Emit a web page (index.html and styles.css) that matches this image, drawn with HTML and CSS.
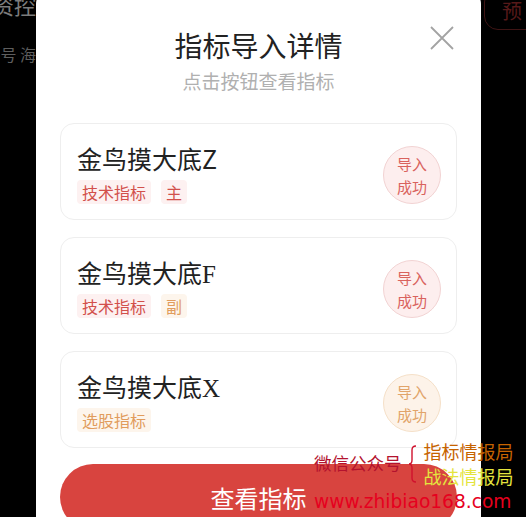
FILE: index.html
```html
<!DOCTYPE html>
<html lang="zh-CN">
<head>
    <meta charset="UTF-8">
    <meta name="viewport" content="width=device-width, initial-scale=1.0">
    <title>指标导入详情</title>
    <link rel="stylesheet" href="styles.css">
</head>
<body>

    <div class="page">
        <!-- dimmed page behind the dialog -->
        <div class="backdrop-left">
            <div class="bg-title">资控</div>
            <div class="bg-tabs">号 海</div>
        </div>

        <div class="modal">
            <div class="modal-header">
                <h1>指标导入详情</h1>
                <p class="subtitle">点击按钮查看指标</p>
                <button class="close-btn" aria-label="关闭">
                    <svg width="24" height="24" viewBox="0 0 24 24">
                        <path d="M1 1 L23 23 M23 1 L1 23" stroke="#a3a3a3" stroke-width="1.8" fill="none"/>
                    </svg>
                </button>
            </div>

            <div class="card-list">
                <div class="card">
                    <div class="card-info">
                        <div class="card-title">金鸟摸大底Z</div>
                        <div class="tags">
                            <span class="tag tag-red">技术指标</span>
                            <span class="tag tag-red">主</span>
                        </div>
                    </div>
                    <div class="badge badge-red">导入<br>成功</div>
                </div>

                <div class="card">
                    <div class="card-info">
                        <div class="card-title">金鸟摸大底<span class="serif">F</span></div>
                        <div class="tags">
                            <span class="tag tag-red">技术指标</span>
                            <span class="tag tag-orange">副</span>
                        </div>
                    </div>
                    <div class="badge badge-red">导入<br>成功</div>
                </div>

                <div class="card">
                    <div class="card-info">
                        <div class="card-title">金鸟摸大底<span class="serif">X</span></div>
                        <div class="tags">
                            <span class="tag tag-orange">选股指标</span>
                        </div>
                    </div>
                    <div class="badge badge-orange">导入<br>成功</div>
                </div>
            </div>

            <button class="view-btn">查看指标</button>
        </div>

        <div class="backdrop-right">
            <div class="bg-pill">预</div>
        </div>
    </div>

    <!-- watermark stamped over the screenshot -->
    <div class="watermark">
        <div class="wm-top">
            <span class="wm-label">微信公众号</span>
            <svg class="wm-brace" width="10" height="38" viewBox="0 0 10 38">
                <path d="M8 1 Q4 1 4 5 L4 15 Q4 19 1 19 Q4 19 4 23 L4 33 Q4 37 8 37" stroke="#d0122e" stroke-width="1.4" fill="none"/>
            </svg>
            <div class="wm-names">
                <span class="wm-name1">指标情报局</span>
                <span class="wm-name2">战法情报局</span>
            </div>
        </div>
        <div class="wm-url">www.zhibiao168.com</div>
    </div>

</body>
</html>
```

FILE: styles.css
```css
/* Page shell */
body {
    margin: 0;
    width: 526px;
    height: 517px;
    overflow: hidden;
    background-color: #000;
    font-family: "Noto Sans CJK SC", "Noto Sans", sans-serif;
    color: #222;
    position: relative;
}

.page {
    display: flex;
    height: 517px;
}

/* Dark page behind the overlay */
.backdrop-left {
    width: 36px;
    flex: none;
    overflow: hidden;
    display: flex;
    flex-direction: column;
    align-items: flex-end;
}

.bg-title {
    margin-top: -12px;
    font-size: 22px;
    line-height: 32px;
    color: #7c7c7c;
    white-space: nowrap;
}

.bg-tabs {
    margin-top: 24px;
    font-size: 16px;
    line-height: 20px;
    color: #5e5e5e;
    white-space: nowrap;
}

.backdrop-right {
    width: 45px;
    flex: none;
    overflow: hidden;
    padding-left: 3px;
}

.bg-pill {
    margin-top: -12px;
    height: 40px;
    width: 70px;
    border: 1px solid #3e1414;
    border-radius: 14px;
    padding-left: 17px;
    font-size: 20px;
    line-height: 44px;
    color: #561919;
    white-space: nowrap;
}

/* Dialog */
.modal {
    width: 445px;
    flex: none;
    box-sizing: border-box;
    margin-top: -10px;
    padding: 0 24px;
    background-color: #fff;
    border-radius: 14px 14px 0 0;
}

.modal-header {
    position: relative;
    padding-top: 37px;
    text-align: center;
}

.modal-header h1 {
    margin: 0;
    font-size: 28px;
    line-height: 36px;
    font-weight: 400;
    color: #222;
}

.subtitle {
    margin: 5px 0 0;
    font-size: 19px;
    line-height: 26px;
    color: #b0b0b0;
}

.close-btn {
    position: absolute;
    top: 36px;
    right: 3px;
    padding: 0;
    border: none;
    background: none;
    line-height: 0;
}

/* Indicator cards */
.card-list {
    margin-top: 29px;
    display: flex;
    flex-direction: column;
    gap: 17px;
}

.card {
    display: flex;
    align-items: center;
    justify-content: space-between;
    border: 1px solid #eeeeee;
    border-radius: 14px;
    padding: 18px 15px 15px 16px;
}

.card-title {
    height: 32px;
    font-size: 25px;
    line-height: 32px;
    color: #222;
}

.serif {
    font-family: "Liberation Serif", serif;
}

.tags {
    display: flex;
    gap: 10px;
    height: 24px;
    margin-top: 6px;
}

.tag {
    font-size: 16px;
    line-height: 24px;
    padding: 0 5px;
    border-radius: 4px;
}

.tag-red {
    color: #d2504b;
    background-color: #fdf1f1;
}

.tag-orange {
    color: #e19c5c;
    background-color: #fdf5ec;
}

.badge {
    width: 56px;
    height: 56px;
    margin-top: 4px;
    border-radius: 50%;
    display: flex;
    align-items: center;
    justify-content: center;
    text-align: center;
    font-size: 15px;
    line-height: 23px;
}

.badge-red {
    color: #d9625d;
    background-color: #fdeeee;
    border: 1px solid #f2d3d3;
}

.badge-orange {
    color: #e1a46a;
    background-color: #fdf3e9;
    border: 1px solid #f5e0c8;
}

/* Bottom action */
.view-btn {
    display: block;
    width: 100%;
    height: 66px;
    margin-top: 16px;
    border: none;
    border-radius: 33px;
    background-color: #d8443f;
    color: #fff;
    font-family: inherit;
    font-size: 24px;
}

/* Watermark */
.watermark {
    position: absolute;
    left: 314px;
    top: 439px;
}

.wm-top {
    display: flex;
    align-items: center;
}

.wm-label {
    font-size: 17.5px;
    line-height: 24px;
    color: #b3122e;
    margin-top: -3px;
}

.wm-brace {
    margin: 0 6px 0 6px;
}

.wm-names {
    display: flex;
    flex-direction: column;
    font-size: 18px;
    line-height: 25px;
}

.wm-name1 {
    color: #c66300;
}

.wm-name2 {
    color: #e4e43e;
}

.wm-url {
    margin-top: 2px;
    font-family: "DejaVu Sans", sans-serif;
    font-size: 18.6px;
    line-height: 22px;
    color: #e6001e;
}
```
